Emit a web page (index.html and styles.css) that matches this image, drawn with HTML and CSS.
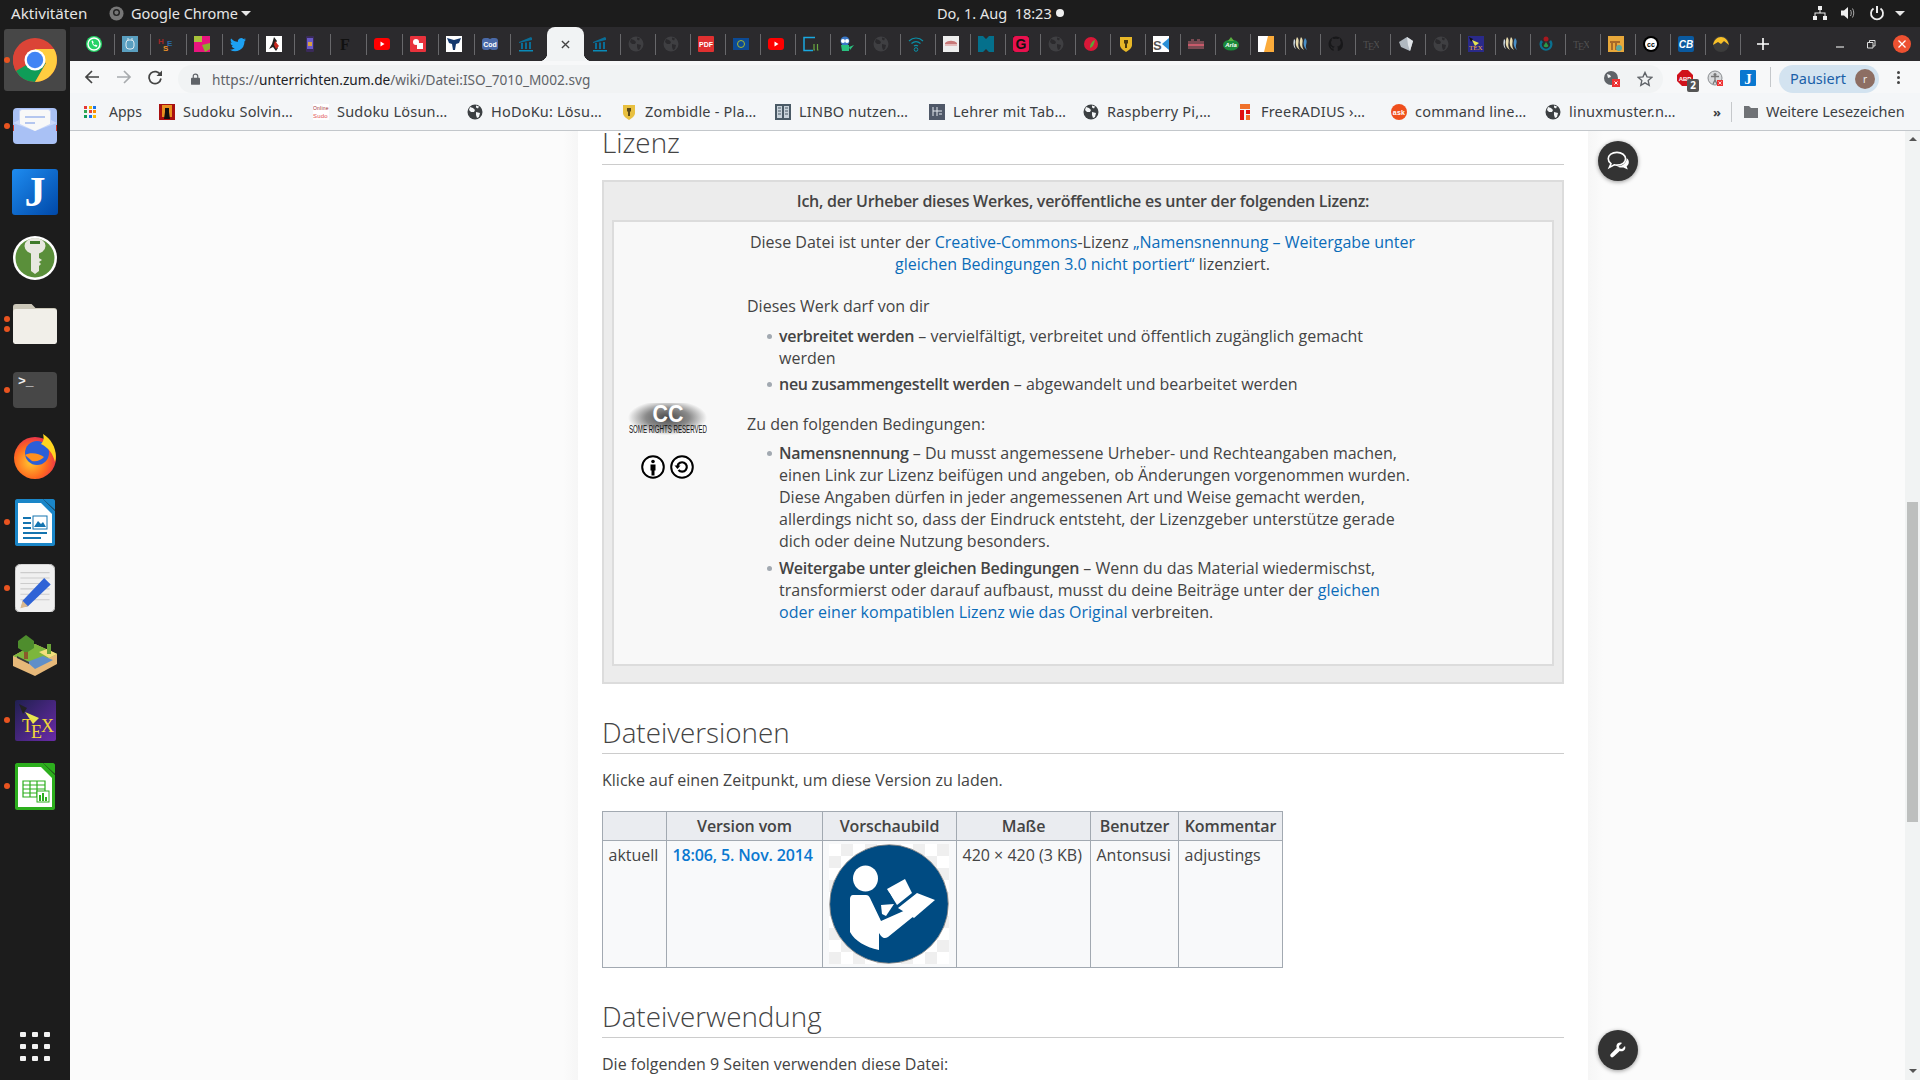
FILE: index.html
```html
<!DOCTYPE html>
<html lang="de">
<head>
<meta charset="utf-8">
<title>Datei:ISO 7010 M002.svg</title>
<link rel="stylesheet" href="styles.css">
</head>
<body>
<svg class="defs" width="0" height="0">
  <defs>
    <symbol id="globe" viewBox="0 0 16 16"><circle cx="8" cy="8" r="7.5" fill="currentColor"/><path d="M3 3l3 1 2 2-1 2-3 0-2-2zM9 8l4 1-1 4-2 1-1-3zM9 1.500l3 1-1 2-2-1z" fill="var(--cut)"/></symbol>
    <symbol id="yt" viewBox="0 0 16 16"><rect x="0" y="2" width="16" height="12" rx="3" fill="#f00"/><path d="M6.500 5.500l4 2.500-4 2.500z" fill="#fff"/></symbol>
    <symbol id="temple" viewBox="0 0 16 16"><path d="M1 6l12-5 1 1v2l-13 3zM3 7h2v6H3zM7 6.500h2V13H7zM11 6h2v7h-2z" fill="#0a6d96"/><path d="M1 14h14v1.500H1z" fill="#0a8bb8"/></symbol>
    <symbol id="steem" viewBox="0 0 16 16"><path d="M1 3c3 2-1 5 2 10-3-2-3-6-2-10z" fill="#c9d6e0"/><path d="M4 1c4 4-1 7 3 13-5-3-5-8-3-13z" fill="#e8dcb0"/><path d="M8 1c4 4-1 7 3 13-5-3-5-8-3-13z" fill="#e8dcb0"/><path d="M12 2c4 4-1 7 2 12-4-3-4-8-2-12z" fill="#4a90c8"/></symbol>
    <symbol id="texd" viewBox="0 0 16 16"><text x="0" y="12" font-family="Liberation Serif" font-size="10" fill="#4f4f4f">T</text><text x="5" y="14" font-family="Liberation Serif" font-size="10" fill="#4f4f4f">E</text><text x="10" y="12" font-family="Liberation Serif" font-size="10" fill="#4f4f4f">X</text></symbol>
    <pattern id="checker" width="24" height="24" patternUnits="userSpaceOnUse"><rect width="24" height="24" fill="#fff"/><rect x="12" width="12" height="12" fill="#efefef"/><rect y="12" width="12" height="12" fill="#efefef"/></pattern>
  </defs>
</svg>

<header class="topbar">
  <span class="activities">Aktivitäten</span>
  <svg class="appicon" viewBox="0 0 16 16"><circle cx="8" cy="8" r="7.500" fill="#777"/><circle cx="8" cy="7" r="3" fill="none" stroke="#222" stroke-width="1.500"/></svg>
  <span class="appname">Google Chrome</span>
  <span class="caret"></span>
  <span class="clock">Do, 1. Aug  18:23</span>
  <span class="clockdot"></span>
  <div class="tray">
    <svg class="tray-net" viewBox="0 0 16 16"><path d="M6 1h4v4H6zM1 11h4v4H1zM11 11h4v4h-4zM7.500 5h1v2.500H13.500V11h-1V8.500h-9V11h-1V7.500h5z" fill="#eee"/></svg>
    <svg class="tray-vol" viewBox="0 0 16 16"><path d="M1 5.500h3L8 2v12L4 10.500H1z" fill="#eee"/><path d="M10.500 5c1 1.800 1 4.200 0 6M12.500 3.500c1.700 2.800 1.700 6.200 0 9" fill="none" stroke="#aaa" stroke-width="1"/></svg>
    <svg class="tray-pow" viewBox="0 0 16 16"><path d="M8 1v7" stroke="#eee" stroke-width="2" fill="none"/><path d="M4.500 3.500a6 6 0 1 0 7 0" stroke="#eee" stroke-width="1.800" fill="none"/></svg>
    <span class="caret tray-caret"></span>
  </div>
</header>

<div class="main">
  <nav class="dock">
    <div class="slot slot-active"><i class="dot"></i>
      <svg class="dicon" viewBox="0 0 44 44"><circle cx="22" cy="22" r="22" fill="#db4437"/><path d="M22 22L3 33A22 22 0 0 1 3 11z" fill="#db4437"/><path d="M22 22L3 33a22 22 0 0 0 19 11l11-19z" fill="#0f9d58"/><path d="M22 22l11 3-11 19a22 22 0 0 0 19-33H22z" fill="#ffcd40"/><circle cx="22" cy="22" r="10.500" fill="#fff"/><circle cx="22" cy="22" r="8.200" fill="#4285f4"/></svg>
    </div>
    <div class="slot"><i class="dot"></i>
      <svg class="dicon" viewBox="0 0 44 36"><rect width="44" height="36" rx="4" fill="#a9c1f5"/><path d="M0 15l6-3V4c0-2 1-3 3-3h26c2 0 3 1 3 3v8l6 3-22 8z" fill="#c7d6fa"/><path d="M7 16V4c0-1 1-2 2-2h26c1 0 2 1 2 2v12l-15 7z" fill="#f8f8f8"/><path d="M12 8h20v2H12zM12 14h10v2H12z" fill="#b4c6ef"/><path d="M0 17h1v6H0zM43 17h1v6h-1z" fill="#c8372d"/></svg>
    </div>
    <div class="slot">
      <svg class="dicon dicon-j" viewBox="0 0 46 46"><defs><linearGradient id="jg" x1="0" y1="0" x2="1" y2="1"><stop offset="0" stop-color="#1e8cf0"/><stop offset="1" stop-color="#0048a8"/></linearGradient></defs><rect width="46" height="46" rx="3" fill="url(#jg)"/><text x="23" y="37" text-anchor="middle" font-family="Liberation Serif" font-weight="700" font-size="42" fill="#fff">J</text></svg>
    </div>
    <div class="slot">
      <svg class="dicon" viewBox="0 0 44 44"><circle cx="22" cy="22" r="22" fill="#fff"/><circle cx="22" cy="22" r="19.500" fill="#5a8f3a"/><ellipse cx="22" cy="10" rx="10.500" ry="8" fill="#e8e8e0"/><path d="M18 14h8v21l-4 3-4-3zM26 22l3 2-3 2 2 2-2 2z" fill="#e8e8e0"/><path d="M17 5h10v3H17z" fill="#3f7a2a"/></svg>
    </div>
    <div class="slot"><i class="dot dot-a"></i><i class="dot dot-b"></i>
      <svg class="dicon" viewBox="0 0 45 41"><path d="M3 0h16l4 4h19c2 0 3 1 3 3v4H0V3c0-2 1-3 3-3z" fill="#cbc7b8"/><rect y="5" width="45" height="36" rx="3" fill="#f1efe9"/><path d="M3 5h16l4-1" fill="#cbc7b8"/></svg>
    </div>
    <div class="slot"><i class="dot"></i>
      <div class="terminal">&gt;_</div>
    </div>
    <div class="slot">
      <svg class="dicon" viewBox="0 0 44 46"><defs><radialGradient id="ffg" cx=".4" cy=".6" r=".7"><stop offset="0" stop-color="#ffc830"/><stop offset=".55" stop-color="#ff6a1f"/><stop offset="1" stop-color="#e21f5c"/></radialGradient></defs><circle cx="22" cy="25" r="21" fill="url(#ffg)"/><circle cx="24" cy="20" r="12" fill="#2a5fd8"/><path d="M30 1c10 6 15 18 12 28-2-8-6-14-14-18 3-3 3-6 2-10z" fill="#ffd520"/><path d="M12 22c5-3 14-2 19 2-3 3-7 5-12 4z" fill="#ff9020"/></svg>
    </div>
    <div class="slot"><i class="dot"></i>
      <svg class="dicon dicon-doc" viewBox="0 0 40 47"><path d="M2 0h26l12 12v33c0 1-1 2-2 2H2c-1 0-2-1-2-2V2C0 1 1 0 2 0z" fill="#1a86c8"/><path d="M3 4h23l11 11v29H3z" fill="#fff"/><path d="M28 0h10c1 0 2 1 2 2v9z" fill="#1a86c8"/><path d="M8 18h8v2H8zM8 23h8v2H8zM8 28h8v2H8zM8 33h24v2H8zM8 38h18v2H8z" fill="#1474b0"/><rect x="18" y="17" width="14" height="13" fill="none" stroke="#1474b0"/><path d="M19 28l4-6 3 3 2-2 3 5z" fill="#1474b0"/></svg>
    </div>
    <div class="slot"><i class="dot"></i>
      <svg class="dicon dicon-doc" viewBox="0 0 37 45"><rect width="37" height="45" rx="6" fill="#f0f0f0" stroke="#bbb"/><path d="M5 8h27M5 13h27M5 18h27M5 23h27M5 28h27M5 33h27" stroke="#ccc"/><path d="M7 34l20-21 6 6-21 20-6 1z" fill="#2f63d6"/><path d="M5 41l2-7 5 5z" fill="#d9b88f"/></svg>
    </div>
    <div class="slot">
      <svg class="dicon" viewBox="0 0 44 44"><path d="M0 24L22 12l22 10v10L22 44 0 34z" fill="#e6b879"/><path d="M0 24L22 12l22 10-22 11z" fill="#7cb63c"/><path d="M14 30l16-6 10 4-18 9z" fill="#5f8fc8"/><path d="M4 26l12 6v-2L4 24z" fill="#3a3a3a"/><path d="M26 20l8-3 10 5-8 4z" fill="#f3df7c"/><path d="M34 12h4v10h-4z" fill="#6aa338"/><path d="M5 9l8-6 8 6v7l-8 5-8-5z" fill="#4e8d2d"/><path d="M11 20h4v7h-4z" fill="#8b5a2b"/></svg>
    </div>
    <div class="slot"><i class="dot"></i>
      <svg class="dicon dicon-tex" viewBox="0 0 41 41"><defs><linearGradient id="tg" x1="0" y1="0" x2="1" y2="1"><stop offset="0" stop-color="#202050"/><stop offset="1" stop-color="#6a2ba8"/></linearGradient></defs><rect width="41" height="41" rx="2" fill="url(#tg)"/><path d="M4 4l8 4-4 6z" fill="#222"/><path d="M10 12l14 6-6 6z" fill="#e6e650"/><text x="7" y="32" font-family="Liberation Serif" font-size="18" fill="#f0d838">T</text><text x="16" y="38" font-family="Liberation Serif" font-size="18" fill="#f0d838">E</text><text x="26" y="32" font-family="Liberation Serif" font-size="18" fill="#f0d838">X</text></svg>
    </div>
    <div class="slot"><i class="dot"></i>
      <svg class="dicon dicon-doc" viewBox="0 0 40 47"><path d="M2 0h26l12 12v33c0 1-1 2-2 2H2c-1 0-2-1-2-2V2C0 1 1 0 2 0z" fill="#2cae1d"/><path d="M3 4h23l11 11v29H3z" fill="#fff"/><path d="M28 0h10c1 0 2 1 2 2v9z" fill="#2cae1d"/><path d="M8 18h22v16H8zM8 22h22M8 26h22M8 30h22M15 18v16M22 18v16" fill="none" stroke="#2cae1d" stroke-width="1.200"/><rect x="22" y="28" width="12" height="11" fill="#fff" stroke="#2cae1d"/><path d="M24 32h2v6h-2zM27 30h2v8h-2zM30 34h2v4h-2z" fill="#2cae1d"/></svg>
    </div>
    <div class="appgrid">
      <i></i><i></i><i></i><i></i><i></i><i></i><i></i><i></i><i></i>
    </div>
  </nav>

  <div class="browser">
    <div class="tabstrip">
      <div class="tab"><svg class="fav" viewBox="0 0 16 16"><circle cx="8" cy="8" r="8" fill="#25d366"/><circle cx="8" cy="8" r="6" fill="none" stroke="#fff" stroke-width="1.400"/><path d="M5.500 5c1 4 2 5 5 6l1-1.500-2-1-.7.700c-.8-.4-1.500-1.200-1.800-2l.7-.7-1-2z" fill="#fff"/></svg></div>
      <div class="tab"><svg class="fav" viewBox="0 0 16 16"><rect width="16" height="16" fill="#5a9fc0"/><rect x="4" y="4" width="8" height="9" rx="3" fill="none" stroke="#dfeaf0"/><path d="M6 2v2M10 2v2" stroke="#dfeaf0"/></svg></div>
      <div class="tab"><svg class="fav" viewBox="0 0 16 16"><text x="0" y="8" font-family="Liberation Sans" font-size="8" font-weight="700" fill="#a02828">H</text><text x="5" y="15" font-family="Liberation Sans" font-size="8" font-weight="700" fill="#e8912a">S</text><text x="9" y="10" font-family="Liberation Sans" font-size="8" font-weight="700" fill="#2a6aa8">E</text></svg></div>
      <div class="tab"><svg class="fav" viewBox="0 0 16 16"><rect width="16" height="16" fill="#e8157e"/><path d="M0 0h8v6H0z" fill="#a8c23a"/><path d="M8 9l8-2v6l-5 3z" fill="#8ab030"/></svg></div>
      <div class="tab"><svg class="fav" viewBox="0 0 16 16"><path d="M16 3.500c-.6.300-1.200.4-1.900.5.700-.4 1.200-1 1.400-1.800-.6.400-1.300.6-2 .8A3.300 3.300 0 0 0 7.900 6C5.200 5.900 2.800 4.600 1.100 2.600c-.9 1.500-.4 3.400 1 4.400-.5 0-1-.2-1.500-.4 0 1.600 1.100 3 2.600 3.300-.5.100-1 .2-1.500.1.400 1.300 1.600 2.300 3.100 2.300A6.600 6.600 0 0 1 0 13.700 9.300 9.300 0 0 0 14.400 5.400c.6-.5 1.200-1.100 1.600-1.900z" fill="#1da1f2"/></svg></div>
      <div class="tab"><svg class="fav" viewBox="0 0 16 16"><rect width="16" height="16" fill="#fff"/><path d="M8 1l3 4-2 3 3 4-2 3-3-4-4 2 3-5z" fill="#222"/><path d="M9 5l4 5-3 3-2-4z" fill="#c8281e"/></svg></div>
      <div class="tab"><svg class="fav" viewBox="0 0 16 16"><rect x="4" y="0" width="8" height="16" rx="1" fill="#3a2a5a"/><rect x="5" y="2" width="6" height="11" fill="#6a5ac8"/><rect x="6" y="6" width="4" height="4" fill="#d8a040"/></svg></div>
      <div class="tab"><svg class="fav" viewBox="0 0 16 16"><text x="2" y="14" font-family="Liberation Serif" font-weight="700" font-size="16" fill="#111">F</text></svg></div>
      <div class="tab"><svg class="fav"><use href="#yt"/></svg></div>
      <div class="tab"><svg class="fav" viewBox="0 0 16 16"><rect width="16" height="16" rx="1" fill="#e8323c"/><circle cx="6" cy="6" r="3" fill="#fff"/><rect x="7" y="7" width="6" height="6" fill="#fff"/></svg></div>
      <div class="tab"><svg class="fav" viewBox="0 0 16 16"><rect width="16" height="16" fill="#fff"/><path d="M8 4L1 2l2 5 3 1 1 6h2l1-6 3-1 2-5z" fill="#14386e"/></svg></div>
      <div class="tab"><svg class="fav" viewBox="0 0 16 16"><path d="M3 2h3l2 1 2-1h3c2 0 3 1 3 3v6c0 2-1 3-3 3h-3l-2-1-2 1H3c-2 0-3-1-3-3V5c0-2 1-3 3-3z" fill="#4a6aa8"/><text x="8" y="11" text-anchor="middle" font-family="Liberation Sans" font-weight="700" font-size="7" fill="#fff">Cod</text></svg></div>
      <div class="tab tab-nosep"><svg class="fav"><use href="#temple"/></svg></div>
      <div class="tab-active"><svg class="tab-x" viewBox="0 0 10 10"><path d="M1 1l8 8M9 1l-8 8" stroke="#444" stroke-width="1.500"/></svg></div>
      <div class="tab tab-first"><svg class="fav"><use href="#temple"/></svg></div>
      <div class="tab tab-r"><svg class="fav fav-globe"><use href="#globe"/></svg></div>
      <div class="tab tab-r"><svg class="fav fav-globe"><use href="#globe"/></svg></div>
      <div class="tab tab-r"><svg class="fav" viewBox="0 0 16 16"><rect width="16" height="16" rx="1" fill="#e03030"/><text x="8" y="11" text-anchor="middle" font-family="Liberation Sans" font-weight="700" font-size="7" fill="#fff">PDF</text></svg></div>
      <div class="tab tab-r"><svg class="fav" viewBox="0 0 16 16"><rect y="2" width="16" height="12" fill="#0c4a94"/><circle cx="8" cy="8" r="3.500" fill="none" stroke="#a8b830"/></svg></div>
      <div class="tab tab-r"><svg class="fav"><use href="#yt"/></svg></div>
      <div class="tab tab-r"><svg class="fav" viewBox="0 0 16 16"><path d="M12 1.500H1v13h9" fill="none" stroke="#1aa8e0" stroke-width="1.500"/><path d="M11 8v6h1M14.500 8v6h1" fill="none" stroke="#6aa840" stroke-width="1.200"/></svg></div>
      <div class="tab tab-r"><svg class="fav" viewBox="0 0 16 16"><circle cx="7" cy="5" r="4.500" fill="#3a78c8"/><circle cx="5" cy="5" r="2" fill="#fff"/><circle cx="9" cy="5" r="2" fill="#fff"/><path d="M3 9h8v6H4zM11 11l5-2-4 5z" fill="#2ac080"/></svg></div>
      <div class="tab tab-r"><svg class="fav fav-globe"><use href="#globe"/></svg></div>
      <div class="tab tab-r"><svg class="fav" viewBox="0 0 16 16"><path d="M1 5c4-4 10-4 14 0M3.500 7.500c3-2.500 6-2.500 9 0M6 10c1.500-1 2.500-1 4 0" fill="none" stroke="#0a90a8" stroke-width="1.200"/><circle cx="8" cy="13.500" r="1.800" fill="none" stroke="#0a90a8"/></svg></div>
      <div class="tab tab-r"><svg class="fav" viewBox="0 0 16 16"><rect width="16" height="16" fill="#eee"/><path d="M2 7c3-3 9-3 12 0v3H2z" fill="#c87878"/><path d="M2 9h12" stroke="#fff"/></svg></div>
      <div class="tab tab-r"><svg class="fav" viewBox="0 0 16 16"><path d="M0 0h5l3 3 3-3h5v16h-5l-3-3-3 3H0z" fill="#04708c"/></svg></div>
      <div class="tab tab-r"><svg class="fav" viewBox="0 0 16 16"><rect width="16" height="16" fill="#111"/><rect width="16" height="16" rx="3" fill="#e8114e"/><text x="8" y="13" text-anchor="middle" font-family="Liberation Sans" font-weight="700" font-size="14" fill="#111">G</text></svg></div>
      <div class="tab tab-r"><svg class="fav fav-globe"><use href="#globe"/></svg></div>
      <div class="tab tab-r"><svg class="fav" viewBox="0 0 16 16"><circle cx="8" cy="8" r="7" fill="#d81838"/><path d="M7 12c0-4 2-7 5-8-1 4-2 7-5 8z" fill="#5aa838"/></svg></div>
      <div class="tab tab-r"><svg class="fav" viewBox="0 0 16 16"><path d="M2 1h12v8c0 3-3 5-6 7-3-2-6-4-6-7z" fill="#e8b828"/><path d="M6 4h4v3l-1 1v4H7V8L6 7z" fill="#4a3a10"/></svg></div>
      <div class="tab tab-r"><svg class="fav" viewBox="0 0 16 16"><rect width="16" height="16" fill="#fff"/><text x="0" y="14" font-family="Liberation Sans" font-weight="700" font-size="13" fill="#555">S</text><path d="M16 2L9 8l7 6z" fill="#2a90d8"/></svg></div>
      <div class="tab tab-r"><svg class="fav" viewBox="0 0 16 16"><path d="M0 5h3V3h3v2h3V3h3v2h4v8H0z" fill="#7a4a52"/><path d="M0 8h16v2H0z" fill="#c85a6a"/></svg></div>
      <div class="tab tab-r"><svg class="fav" viewBox="0 0 16 16"><ellipse cx="8" cy="9" rx="8" ry="5.500" fill="#1a8a3a"/><path d="M8 1l3 4H5z" fill="#5ab040"/><text x="8" y="11" text-anchor="middle" font-family="Liberation Sans" font-style="italic" font-weight="700" font-size="6" fill="#fff">Arla</text></svg></div>
      <div class="tab tab-r"><svg class="fav" viewBox="0 0 16 16"><rect width="16" height="16" fill="#fff"/><path d="M10 0h6v16H6z" fill="#fbab3a"/></svg></div>
      <div class="tab tab-r"><svg class="fav"><use href="#steem"/></svg></div>
      <div class="tab tab-r"><svg class="fav" viewBox="0 0 16 16"><path d="M8 .500a7.500 7.500 0 0 0-2.400 14.600v-2.600c-2 .4-2.500-1-2.500-1-.4-1-1-1.200-1-1.200 1-.6 1.800.7 1.800.7.700 1.200 1.800.9 2.200.6 0-.5.300-.9.500-1.100-2-.2-3.600-1-3.600-4 0-.9.300-1.600.8-2.100-.1-.2-.4-1 .1-2.100 0 0 .7-.2 2.100.8a7 7 0 0 1 3.800 0c1.400-1 2.100-.8 2.100-.8.500 1.100.2 1.900.1 2.100.5.500.8 1.200.8 2.100 0 3-1.800 3.700-3.600 3.900.3.300.6.800.6 1.500v3.200A7.500 7.500 0 0 0 8 .500z" fill="#18181a"/></svg></div>
      <div class="tab tab-r"><svg class="fav"><use href="#texd"/></svg></div>
      <div class="tab tab-r"><svg class="fav" viewBox="0 0 16 16"><path d="M1 6l8-5 6 4-3 10-9-4z" fill="#b0b8c0"/><path d="M9 1l6 4-3 10-2-6z" fill="#e0e4e8"/></svg></div>
      <div class="tab tab-r"><svg class="fav fav-globe"><use href="#globe"/></svg></div>
      <div class="tab tab-r"><svg class="fav" viewBox="0 0 16 16"><rect width="16" height="16" fill="#2a2a8a"/><path d="M1 1l4 2-2 3z" fill="#111"/><path d="M4 4l7 3-4 3z" fill="#e6e650"/><text x="1" y="14" font-family="Liberation Serif" font-size="7" fill="#f0a838">TEX</text></svg></div>
      <div class="tab tab-r"><svg class="fav"><use href="#steem"/></svg></div>
      <div class="tab tab-r"><svg class="fav" viewBox="0 0 16 16"><circle cx="8" cy="3" r="2.500" fill="#a8181e"/><path d="M3 4a6.500 6.500 0 1 0 10 0l-2 2a4 4 0 1 1-6 0z" fill="#0a7090"/><path d="M5.500 10a3 3 0 0 0 5 0L8 6z" fill="#2a9a48"/></svg></div>
      <div class="tab tab-r"><svg class="fav"><use href="#texd"/></svg></div>
      <div class="tab tab-r"><svg class="fav" viewBox="0 0 16 16"><rect width="16" height="16" fill="#e8a83a"/><path d="M2 5h10v2H2zM3 7h2v7H3zM7 7h2v7H7z" fill="#a86a28"/><circle cx="11" cy="12" r="3" fill="#5aa8a0"/></svg></div>
      <div class="tab tab-r"><svg class="fav" viewBox="0 0 16 16"><circle cx="8" cy="8" r="8" fill="#000"/><circle cx="8" cy="8" r="6" fill="#fff"/><text x="8" y="10.500" text-anchor="middle" font-family="Liberation Sans" font-weight="700" font-size="7" fill="#000">cc</text></svg></div>
      <div class="tab tab-r"><svg class="fav" viewBox="0 0 16 16"><rect width="16" height="16" rx="2" fill="#0a5aa0"/><text x="8" y="12" text-anchor="middle" font-family="Liberation Sans" font-style="italic" font-weight="700" font-size="10" fill="#fff">CB</text></svg></div>
      <div class="tab tab-r"><svg class="fav" viewBox="0 0 16 16"><circle cx="8" cy="8" r="8" fill="#3c3c3c"/><path d="M0 9c1-5 4-8 8-8s7 3 8 8L11 5 8 8 5 6z" fill="#f8c028"/></svg></div>
      <div class="newtab"><svg viewBox="0 0 12 12"><path d="M6 0v12M0 6h12" stroke="#fff" stroke-width="1.600"/></svg></div>
      <div class="winctl">
        <span class="wbtn"><svg viewBox="0 0 10 10"><path d="M1 8h8" stroke="#ddd" stroke-width="1.200"/></svg></span>
        <span class="wbtn"><svg viewBox="0 0 10 10"><path d="M1.500 3.500h5.500V9H1.500zM3.500 3.500V1.500H9V7H7" fill="none" stroke="#ddd"/></svg></span>
        <span class="wbtn wclose"><svg viewBox="0 0 10 10"><path d="M1.500 1.500l7 7M8.500 1.500l-7 7" stroke="#fff" stroke-width="1.300"/></svg></span>
      </div>
    </div>

    <div class="toolbar">
      <svg class="tbi tbi-back" viewBox="0 0 16 16"><path d="M15 8H2M8 2L2 8l6 6" fill="none" stroke="#444" stroke-width="1.700"/></svg>
      <svg class="tbi tbi-fwd" viewBox="0 0 16 16"><path d="M1 8h13M8 2l6 6-6 6" fill="none" stroke="#a8abae" stroke-width="1.700"/></svg>
      <svg class="tbi tbi-rel" viewBox="0 0 16 16"><path d="M13.500 6A6 6 0 1 0 14 9.500" fill="none" stroke="#444" stroke-width="1.700"/><path d="M15 1.500V7H9.500z" fill="#444"/></svg>
      <div class="omnibox">
        <svg class="lock" viewBox="0 0 10 13"><path d="M2.500 5.500V3.500a2.500 2.500 0 0 1 5 0v2" fill="none" stroke="#5f6368" stroke-width="1.300"/><rect y="5" width="10" height="8" rx="1" fill="#5f6368"/></svg>
        <span class="url"><span class="url-dim">https://</span>unterrichten.zum.de<span class="url-dim">/wiki/Datei:ISO_7010_M002.svg</span></span>
        <svg class="omni-tr" viewBox="0 0 16 16"><circle cx="7" cy="7" r="7" fill="#5f6368"/><path d="M3 3l3 1 1 2-3 1zM8 8l4 1-2 3-2-1z" fill="#f1f3f4"/><rect x="8" y="8" width="8" height="8" fill="#e33"/><path d="M10.500 10.500l3 3M13.500 10.500l-3 3" stroke="#fff"/></svg>
        <svg class="omni-star" viewBox="0 0 16 16"><path d="M8 1.500l2 4.400 4.800.5-3.600 3.200 1 4.700L8 11.900l-4.200 2.400 1-4.700L1.200 6.400 6 5.900z" fill="none" stroke="#5f6368" stroke-width="1.400"/></svg>
      </div>
      <div class="ext ext-abp">
        <svg viewBox="0 0 16 16"><path d="M5 0h6l5 5v6l-5 5H5l-5-5V5z" fill="#d0121b"/><text x="8" y="10.500" text-anchor="middle" font-family="Liberation Sans" font-weight="700" font-size="6" fill="#fff">ABP</text></svg>
        <span class="badge">2</span>
      </div>
      <div class="ext ext-acc">
        <svg viewBox="0 0 16 16"><circle cx="8" cy="8" r="7" fill="#d8dadc" stroke="#8a8d90"/><circle cx="8" cy="4.500" r="1.500" fill="#777"/><path d="M4 6.500h8M8 6.500V10l-2 4M8 10l2 4" stroke="#777" stroke-width="1.300" fill="none"/><rect x="10" y="10" width="6" height="6" fill="#e33"/><path d="M11.500 11.500l3 3M14.500 11.500l-3 3" stroke="#fff" stroke-width=".8"/></svg>
      </div>
      <div class="ext ext-j">
        <svg viewBox="0 0 16 16"><rect width="16" height="16" rx="1" fill="#0a78d0"/><text x="8" y="14" text-anchor="middle" font-family="Liberation Serif" font-weight="700" font-size="15" fill="#fff">J</text></svg>
      </div>
      <span class="tb-sep"></span>
      <div class="profile"><span class="profile-name">Pausiert</span><span class="avatar">r</span></div>
      <div class="kebab"><i></i><i></i><i></i></div>
    </div>

    <div class="bookmarks">
      <div class="bm-apps">
        <div class="apps-grid"><i class="c1"></i><i class="c2"></i><i class="c3"></i><i class="c4"></i><i class="c5"></i><i class="c6"></i><i class="c7"></i><i class="c3"></i><i class="c2"></i></div>
        <span>Apps</span>
      </div>
      <div class="bm"><svg class="fav" viewBox="0 0 16 16"><rect width="16" height="16" fill="#a81010"/><rect x="3" y="1" width="10" height="12" fill="#e89020"/><path d="M6 4h4v4l1 7H5l1-7z" fill="#111"/></svg><span>Sudoku Solvin…</span></div>
      <div class="bm"><svg class="fav" viewBox="0 0 16 16"><rect width="16" height="16" fill="#fff"/><text x="0" y="6" font-family="Liberation Sans" font-size="5" fill="#a03030">Online</text><text x="0" y="14" font-family="Liberation Sans" font-size="6" fill="#e05050">Sudo</text></svg><span>Sudoku Lösun…</span></div>
      <div class="bm"><svg class="fav fav-bmg"><use href="#globe"/></svg><span>HoDoKu: Lösu…</span></div>
      <div class="bm"><svg class="fav" viewBox="0 0 16 16"><path d="M2 1h12v8c0 3-3 5-6 7-3-2-6-4-6-7z" fill="#e8c040"/><path d="M6 4h4v3l-1 1v4H7V8L6 7z" fill="#5a4a18"/></svg><span>Zombidle - Pla…</span></div>
      <div class="bm"><svg class="fav" viewBox="0 0 16 16"><rect width="16" height="16" fill="#4a5a66"/><path d="M2 2h5v12H2zM9 2h5v12H9z" fill="#c8d2da"/><path d="M3 4h3M3 7h3M3 10h3M10 4h3M10 7h3M10 10h3" stroke="#4a5a66"/></svg><span>LINBO nutzen…</span></div>
      <div class="bm"><svg class="fav" viewBox="0 0 16 16"><rect width="16" height="16" fill="#4f5868"/><path d="M4 3v9M8 3v9M4 7h9M10 10h3" stroke="#e4e8ee" fill="none"/></svg><span>Lehrer mit Tab…</span></div>
      <div class="bm"><svg class="fav fav-bmg"><use href="#globe"/></svg><span>Raspberry Pi,…</span></div>
      <div class="bm"><svg class="fav" viewBox="0 0 16 16"><path d="M3 0h10v5H3z" fill="#f0712a"/><path d="M3 6h4v10H3z" fill="#e01010"/><path d="M9 6h4v4H9z" fill="#e01010"/><path d="M9 11h4v5H9z" fill="#f0712a"/></svg><span>FreeRADIUS ›…</span></div>
      <div class="bm"><svg class="fav" viewBox="0 0 16 16"><circle cx="8" cy="8" r="8" fill="#ef4f1d"/><text x="8" y="10.500" text-anchor="middle" font-family="Liberation Sans" font-weight="700" font-size="7" fill="#fff">ask</text></svg><span>command line…</span></div>
      <div class="bm"><svg class="fav fav-bmg"><use href="#globe"/></svg><span>linuxmuster.n…</span></div>
      <span class="bm-more">»</span>
      <span class="bm-sep"></span>
      <div class="bm-folder"><svg class="fav" viewBox="0 0 16 16"><path d="M1 2h5l2 2h7v10H1z" fill="#6f7276"/></svg><span>Weitere Lesezeichen</span></div>
    </div>

    <div class="viewport">
      <aside class="gutter-left"></aside>
      <main class="content">
        <h2 class="h2-first">Lizenz</h2>
        <div class="licensebox">
          <div class="lic-title">Ich, der Urheber dieses Werkes, veröffentliche es unter der folgenden Lizenz:</div>
          <div class="lic-inner">
            <div class="cc-col">
              <svg class="cc-badge" viewBox="0 0 79 35"><defs><radialGradient id="ccg" cx=".5" cy=".42" r=".5"><stop offset="0" stop-color="#4a4a4a"/><stop offset=".55" stop-color="#8a8a8a"/><stop offset="1" stop-color="#f8f8f8"/></radialGradient></defs><rect width="79" height="35" fill="url(#ccg)"/><text x="40" y="19" text-anchor="middle" font-family="Liberation Sans" font-weight="700" font-size="23" fill="#fff" textLength="31" lengthAdjust="spacingAndGlyphs">CC</text><text x="40" y="30" text-anchor="middle" font-family="Liberation Sans" font-size="10" fill="#111" textLength="78" lengthAdjust="spacingAndGlyphs">SOME RIGHTS RESERVED</text></svg>
              <div class="cc-icons">
                <svg viewBox="0 0 24 24"><circle cx="12" cy="12" r="10.800" fill="#fff" stroke="#000" stroke-width="2"/><circle cx="12" cy="6.500" r="1.800" fill="#000"/><path d="M9.500 9.500h5v6h-1v5h-3v-5h-1z" fill="#000"/></svg>
                <svg viewBox="0 0 24 24"><circle cx="12" cy="12" r="10.800" fill="#fff" stroke="#000" stroke-width="2"/><path d="M7.500 11a4.700 4.700 0 1 1 1 4" fill="none" stroke="#000" stroke-width="2.200"/><path d="M4.500 10.500h6l-3 3.500z" fill="#000"/></svg>
              </div>
            </div>
            <div class="lic-text">
              <p class="lic-lead">Diese Datei ist unter der <a href="#">Creative-Commons</a>-Lizenz <a href="#">„Namensnennung – Weitergabe unter gleichen Bedingungen 3.0 nicht portiert“</a> lizenziert.</p>
              <p class="lic-p1">Dieses Werk darf von dir</p>
              <ul class="lic-list1">
                <li><b>verbreitet werden</b> – vervielfältigt, verbreitet und öffentlich zugänglich gemacht werden</li>
                <li><b>neu zusammengestellt werden</b> – abgewandelt und bearbeitet werden</li>
              </ul>
              <p class="lic-p2">Zu den folgenden Bedingungen:</p>
              <ul class="lic-list2">
                <li><b>Namensnennung</b> – Du musst angemessene Urheber- und Rechteangaben machen, einen Link zur Lizenz beifügen und angeben, ob Änderungen vorgenommen wurden. Diese Angaben dürfen in jeder angemessenen Art und Weise gemacht werden, allerdings nicht so, dass der Eindruck entsteht, der Lizenzgeber unterstütze gerade dich oder deine Nutzung besonders.</li>
                <li><b>Weitergabe unter gleichen Bedingungen</b> – Wenn du das Material wiedermischst, transformierst oder darauf aufbaust, musst du deine Beiträge unter der <a href="#">gleichen oder einer kompatiblen Lizenz wie das Original</a> verbreiten.</li>
              </ul>
            </div>
          </div>
        </div>

        <h2 class="h2-next">Dateiversionen</h2>
        <p class="para">Klicke auf einen Zeitpunkt, um diese Version zu laden.</p>
        <table class="filehistory">
          <tr>
            <th class="c-state"></th>
            <th class="c-date">Version vom</th>
            <th class="c-thumb">Vorschaubild</th>
            <th class="c-size">Maße</th>
            <th class="c-user">Benutzer</th>
            <th class="c-comment">Kommentar</th>
          </tr>
          <tr>
            <td>aktuell</td>
            <td class="date"><a href="#">18:06, 5. Nov. 2014</a></td>
            <td class="thumbcell">
              <svg class="m002" viewBox="0 0 120 120">
                <rect width="120" height="120" fill="url(#checker)"/>
                <circle cx="60" cy="60" r="59" fill="#004b82"/>
                <circle cx="60" cy="60" r="59.300" fill="none" stroke="#777" stroke-width=".8"/>
                <ellipse cx="36.500" cy="34.500" rx="12.500" ry="13" fill="#fff"/>
                <path d="M24 51h13c2 0 3 1 4 3l11 23 27-12 6 7-26 21c-3 2-5 1-7-1l-2-3v17C36 103 26 97 21 88V55c0-2 1-4 3-4z" fill="#fff"/>
                <path d="M52 61l13-1-8 12-4-2z" fill="#fff"/>
                <path d="M88 49l18 7-21 18-16-10z" fill="#fff"/>
                <path d="M55 44l22-11 9 17-18 14z" fill="#004b82"/>
                <path d="M58 45l18-10 7 14-15 12z" fill="#fff"/>
                <path d="M60 49l6 11" stroke="#004b82" stroke-width="1"/>
              </svg>
            </td>
            <td>420 × 420 (3 KB)</td>
            <td>Antonsusi</td>
            <td>adjustings</td>
          </tr>
        </table>

        <h2 class="h2-next">Dateiverwendung</h2>
        <p class="para">Die folgenden 9 Seiten verwenden diese Datei:</p>
      </main>
      <aside class="panel-right">
        <div class="fab fab-chat"><svg viewBox="0 0 24 24"><path d="M11 4C6.500 4 3 6.500 3 10c0 1.800 1 3.400 2.500 4.500L4 18l4.500-2.500c.8.200 1.600.3 2.500.3 4.500 0 8-2.500 8-5.800S15.500 4 11 4z" fill="#333" stroke="#fff" stroke-width="1.500"/><path d="M20 9.500c1.500 1 2 2.200 2 3.700 0 1.500-.8 2.800-2 3.700l1 3-4-2c-2.200.5-4.500 0-6-1 4.500 0 9-2.500 9-7.400z" fill="#fff"/></svg></div>
        <div class="fab fab-tool"><svg viewBox="0 0 16 16"><path d="M15 4l-3 3-2.500-.5L9 4l3-3C9.500 0 7 1 6.500 3.500c-.2 1 0 1.800.2 2.500L1 11.800c-1 1-1 2.200-.2 3s2 .8 3-.2L9.700 9c.8.300 1.700.4 2.500.2C14.800 8.700 16 6.500 15 4z" fill="#fff"/></svg></div>
      </aside>
      <div class="scrollbar">
        <span class="arrow-up"></span>
        <span class="scroll-thumb"></span>
        <span class="arrow-down"></span>
      </div>
    </div>
  </div>
</div>
</body>
</html>
```
FILE: styles.css
```css
* { box-sizing: border-box; }
html, body { margin: 0; padding: 0; }
body { width: 1920px; height: 1080px; overflow: hidden; background: #1c1c1c; font-family: "Noto Sans", sans-serif; display: flex; flex-direction: column; }
.defs { position: absolute; }

/* Top bar */
.topbar { height: 27px; flex: none; display: flex; align-items: center; color: #e6e6e6; font-size: 14.500px; background: #1c1c1c; padding-bottom: 1px; }
.activities { margin-left: 11px; width: 98px; flex: none; font-size: 15.200px; }
.appicon { width: 15px; height: 15px; flex: none; }
.appname { margin-left: 7px; flex: none; width: 105px; white-space: nowrap; }
.caret { width: 0; height: 0; border-left: 5px solid transparent; border-right: 5px solid transparent; border-top: 5px solid #e6e6e6; margin-left: 5px; flex: none; }
.clock { margin-left: 686px; width: 117px; flex: none; white-space: pre; }
.clockdot { width: 8px; height: 8px; border-radius: 50%; background: #eee; margin-left: 2px; flex: none; }
.tray { margin-left: auto; display: flex; align-items: center; padding-right: 15px; }
.tray svg { flex: none; }
.tray-net { width: 16px; height: 16px; }
.tray-vol { width: 16px; height: 16px; margin-left: 12px; }
.tray-pow { width: 16px; height: 16px; margin-left: 13px; }
.tray-caret { margin-left: 10px; }

.main { flex: 1; display: flex; min-height: 0; }

/* Dock */
.dock { width: 70px; flex: none; background: #1c1c1c; display: flex; flex-direction: column; }
.slot { height: 66px; flex: none; display: flex; align-items: center; justify-content: center; position: relative; }
.slot-active::before { content: ""; position: absolute; left: 4px; right: 4px; top: 2px; bottom: 2px; background: #474747; border-radius: 3px; }
.dicon { width: 44px; height: auto; position: relative; display: block; }
.dicon-j { width: 46px; }
.dicon-doc { width: 40px; }
.dicon-tex { width: 41px; }
.dot { position: absolute; left: 4px; top: 30px; width: 6px; height: 6px; border-radius: 50%; background: #e95420; z-index: 1; }
.dot-a { top: 25px; }
.dot-b { top: 35px; }
.terminal { width: 44px; height: 36px; background: #474747; border-radius: 4px; color: #eee; font: 700 13px/14px "Liberation Mono", monospace; padding: 3px 5px; }
.appgrid { margin-top: auto; margin-bottom: 19px; margin-left: 20px; display: grid; grid-template-columns: repeat(3, 6px); gap: 7px 6px; }
.appgrid i { width: 6px; height: 5px; background: #f2f2f2; border-radius: 1px; display: block; }

/* Browser */
.browser { flex: 1; min-width: 0; display: flex; flex-direction: column; }
.tabstrip { height: 34px; flex: none; background: #2b2a2d; display: flex; align-items: center; padding-left: 9px; --cut: #2b2a2d; }
.tab { width: 36px; height: 34px; flex: none; display: flex; align-items: center; padding-left: 7px; }
.tab::after { content: ""; width: 1px; height: 21px; background: #68686b; margin-left: auto; }
.tab-nosep::after { display: none; }
.tab-first { width: 37px; padding-left: 8px; }
.tab-r { width: 35px; }
.fav { width: 16px; height: 16px; flex: none; display: block; }
.fav-globe { color: #3f3f42; }
.fav-bmg { color: #3c4043; }
.tab-active { width: 37px; height: 34px; flex: none; background: #f1f3f4; border-radius: 8px 8px 0 0; display: flex; align-items: center; justify-content: center; position: relative; }
.tab-active::before, .tab-active::after { content: ""; position: absolute; bottom: 0; width: 8px; height: 8px; }
.tab-active::before { left: -8px; background: radial-gradient(circle at 0 0, transparent 8px, #f1f3f4 8.500px); }
.tab-active::after { right: -8px; background: radial-gradient(circle at 100% 0, transparent 8px, #f1f3f4 8.500px); }
.tab-x { width: 9px; height: 9px; }
.newtab { width: 44px; flex: none; display: flex; justify-content: center; }
.newtab svg { width: 12px; height: 12px; }
.winctl { margin-left: auto; display: flex; padding-right: 3px; }
.wbtn { width: 31px; height: 20px; display: flex; align-items: center; justify-content: center; }
.wbtn svg { width: 10px; height: 10px; }
.wclose { position: relative; }
.wclose::before { content: ""; position: absolute; left: 7px; top: 1px; width: 18px; height: 18px; border-radius: 50%; background: #ed5131; }
.wclose svg { position: relative; }

.toolbar { height: 32px; flex: none; background: #f7f8f9; display: flex; align-items: center; position: relative; }
.tbi { width: 16px; height: 16px; flex: none; }
.tbi-back { margin-left: 14px; }
.tbi-fwd { margin-left: 16px; }
.tbi-rel { margin-left: 15px; }
.omnibox { margin-left: 15px; width: 1485px; height: 28px; margin-top: 4px; background: #f1f3f4; border-radius: 14px; display: flex; align-items: center; flex: none; }
.lock { width: 9px; height: 12px; margin-left: 13px; flex: none; }
.url { margin-left: 12px; font-size: 13.650px; color: #202124; white-space: nowrap; }
.url-dim { color: #5f6368; }
.omni-tr { width: 16px; height: 16px; margin-left: auto; flex: none; }
.omni-star { width: 16px; height: 16px; margin-left: 17px; margin-right: 10px; flex: none; }
.ext { width: 16px; height: 16px; flex: none; position: relative; margin-top: 2px; }
.ext svg { display: block; width: 16px; height: 16px; }
.ext-abp { margin-left: 14px; }
.ext-acc { margin-left: 14px; }
.ext-j { margin-left: 17px; }
.badge { position: absolute; right: -6px; bottom: -6px; width: 12px; height: 13px; background: #555; border-radius: 2px; color: #fff; font-size: 10px; font-weight: 700; line-height: 13px; text-align: center; }
.tb-sep { width: 1px; height: 20px; background: #c5c8cb; margin-left: 14px; flex: none; }
.profile { margin-left: 8px; width: 100px; height: 28px; margin-top: 4px; border-radius: 14px; background: #d3e3f0; display: flex; align-items: center; flex: none; padding-left: 11px; color: #1a5fa8; font-size: 14.500px; }
.profile-name { margin-top: -2px; }
.avatar { margin-left: auto; margin-right: 4px; width: 20px; height: 20px; border-radius: 50%; background: #8d6e63; color: #eee; font-size: 10px; line-height: 20px; text-align: center; }
.kebab { margin-left: 18px; display: flex; flex-direction: column; gap: 2px; flex: none; }
.kebab i { width: 3px; height: 3px; border-radius: 50%; background: #444; display: block; }

.bookmarks { height: 38px; flex: none; background: #f4f6f8; border-bottom: 1px solid #c3c7cb; display: flex; align-items: center; font-size: 14px; color: #3c4043; white-space: nowrap; --cut: #f4f6f8; }
.bm-apps { width: 89px; flex: none; display: flex; align-items: center; padding-left: 14px; }
.bm-apps span { margin-left: 13px; }
.apps-grid { width: 12px; display: grid; grid-template-columns: repeat(3, 3px); gap: 1.500px; flex: none; }
.apps-grid i { width: 3px; height: 3px; display: block; }
.c1 { background: #e53935; } .c2 { background: #fbbc05; } .c3 { background: #1a73e8; } .c4 { background: #34a853; } .c5 { background: #ea4335; } .c6 { background: #fb8c00; } .c7 { background: #0f9d58; }
.bm { width: 154px; flex: none; display: flex; align-items: center; font-size: 14.500px; letter-spacing: .2px; }
.bm span { margin-left: 8px; margin-top: -2px; }
.bm-more { margin-left: 14px; width: 10px; flex: none; font-weight: 700; font-size: 13px; }
.bm-sep { width: 1px; height: 20px; background: #c5c8cb; margin-left: 8px; flex: none; }
.bm-folder { margin-left: 11px; display: flex; align-items: center; flex: none; font-size: 14.500px; }
.bm-folder span { margin-left: 7px; margin-top: -2px; }

/* Page */
.viewport { flex: 1; min-height: 0; display: flex; position: relative; overflow: hidden; background: #fff; }
.gutter-left { width: 508px; flex: none; background: linear-gradient(to left, #f6f6f6, #fbfbfb 15px); }
.content { width: 1010px; flex: none; padding: 0 24px; background: #fff; color: #444; font: 16px/22px "Open Sans", sans-serif; }
.panel-right { flex: 1; background: linear-gradient(to right, #f6f6f6, #fbfbfb 15px); position: relative; }
.scrollbar { width: 15px; flex: none; background: #f1f3f3; position: relative; display: flex; flex-direction: column; align-items: center; }
.arrow-up { margin-top: 6px; width: 0; height: 0; border-left: 4px solid transparent; border-right: 4px solid transparent; border-bottom: 4px solid #555; flex: none; }
.scroll-thumb { width: 11px; height: 320px; background: #bdbfbe; margin-top: 361px; flex: none; }
.arrow-down { margin-top: auto; margin-bottom: 7px; width: 0; height: 0; border-left: 4px solid transparent; border-right: 4px solid transparent; border-top: 4px solid #555; flex: none; }
.fab { position: absolute; left: 10px; width: 40px; height: 40px; border-radius: 50%; background: #333; box-shadow: 0 1px 4px rgba(0,0,0,.4); display: flex; align-items: center; justify-content: center; }
.fab-chat { top: 10px; }
.fab-chat svg { width: 26px; height: 26px; }
.fab-tool { top: 899px; }
.fab-tool svg { width: 16px; height: 16px; }

h2 { margin: 0; height: 34px; font: 300 27.800px/24px "Open Sans", sans-serif; color: #444; border-bottom: 1px solid #ccc; }
.h2-first { line-height: 22px; }
a { color: #0b6cb8; text-decoration: none; }
b { font-weight: 600; letter-spacing: -.27px; }
p { margin: 0; }

.licensebox { margin-top: 15px; height: 504px; background: #ececec; border: 2px solid #dcdcdc; padding: 8px 8px 15px; }
.lic-title { text-align: center; font-weight: 600; height: 30px; letter-spacing: -.27px; }
.lic-inner { height: 446px; background: #f8f8f8; border: 2px solid #dcdcdc; display: flex; align-items: center; }
.cc-col { width: 106px; flex: none; display: flex; flex-direction: column; align-items: center; margin-top: -4px; }
.cc-badge { width: 79px; height: 35px; display: block; }
.cc-icons { margin-top: 17px; display: flex; gap: 5px; }
.cc-icons svg { width: 24px; height: 24px; display: block; }
.lic-text { width: 671px; margin-left: 27px; flex: none; align-self: flex-start; padding-top: 9px; }
.lic-lead { text-align: center; }
.lic-p1 { margin-top: 20px; }
.lic-p2 { margin-top: 18px; }
ul { margin: 0; padding: 0 0 0 32px; list-style: none; }
.lic-list1 { margin-top: 8px; }
.lic-list2 { margin-top: 7px; }
li { position: relative; margin-top: 4px; width: 635px; }
li:first-child { margin-top: 0; }
li::before { content: ""; position: absolute; left: -12px; top: 9px; width: 5px; height: 5px; border-radius: 50%; background: #a2a9b1; }
.lic-list2 li + li { margin-top: 5px; }

.h2-next { margin-top: 36px; }
.para { margin-top: 15px; }
.filehistory { margin-top: 20px; border-collapse: collapse; table-layout: fixed; width: 680px; background: #f8f9fa; }
.filehistory th, .filehistory td { border: 1px solid #a2a9b1; padding: 3px 5.500px; vertical-align: top; }
.filehistory th { background: #eaecf0; text-align: center; font-weight: 600; height: 29px; letter-spacing: -.1px; }
.filehistory td { height: 127px; }
.filehistory .date a { color: #0a78d0; font-weight: 600; white-space: nowrap; letter-spacing: -.15px; }
.filehistory .thumbcell { padding: 3px 0 0 6px; }
.c-state { width: 64px; }
.c-date { width: 156px; }
.c-thumb { width: 134px; }
.c-size { width: 134px; }
.c-user { width: 88px; }
.c-comment { width: 104px; }
.m002 { display: block; width: 120px; height: 120px; }
```
